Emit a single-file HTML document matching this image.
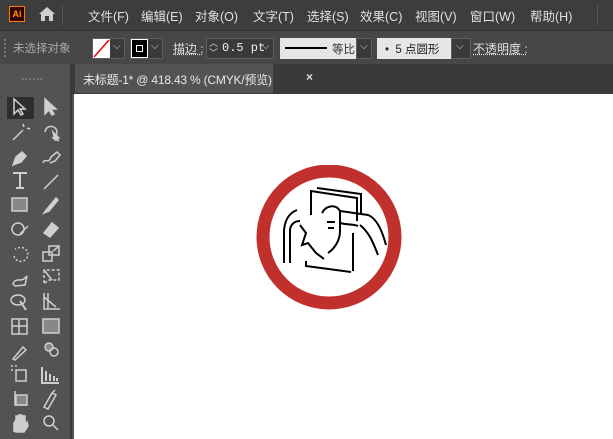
<!DOCTYPE html>
<html><head><meta charset="utf-8"><style>
*{margin:0;padding:0;box-sizing:border-box}
body{width:613px;height:439px;overflow:hidden;background:#535353;font-family:"Liberation Sans","Noto Sans CJK SC",sans-serif;position:relative;color:#d6d6d6}
.a{position:absolute}
#menu{left:0;top:0;width:613px;height:30px;background:#3d3d3d}
#menu span{position:absolute;top:6px;font-size:12.5px;color:#e0e0e0}
#ctl{left:0;top:30px;width:613px;height:34px;background:#474747;border-top:1px solid #333}
.box{position:absolute;border:1px solid #5e5e5e;background:#3a3a3a}
#tabs{left:62px;top:64px;width:551px;height:30px;background:#3a3a3a}
#tab{left:75px;top:64px;width:198px;height:29px;background:#535353;font-size:12px;color:#e8e8e8;padding:7px 0 0 8px;white-space:nowrap;letter-spacing:-0.2px}
#canvas{left:74px;top:94px;width:539px;height:345px;background:#fff}
#tool{left:0;top:64px;width:72px;height:375px;background:#535353;border-right:2px solid #3a3a3a}
</style></head><body>
<div id="menu" class="a">
 <div class="a" style="left:9px;top:6px;width:16px;height:16px;background:#330000;border:1px solid #ff7c00;color:#ff9a00;font-size:9px;font-weight:bold;text-align:center;line-height:14px">Ai</div>
 <svg class="a" style="left:38px;top:6px" width="18" height="16"><path d="M9 1L1 8h2v7h4v-5h4v5h4V8h2z" fill="#cfcfcf"/></svg>
 <div class="a" style="left:62px;top:5px;width:1px;height:20px;background:#555"></div>
 <span style="left:88px">文件(F)</span><span style="left:141px">编辑(E)</span><span style="left:195px">对象(O)</span><span style="left:253px">文字(T)</span><span style="left:307px">选择(S)</span><span style="left:360px">效果(C)</span><span style="left:415px">视图(V)</span><span style="left:470px">窗口(W)</span><span style="left:530px">帮助(H)</span>
 <div class="a" style="top:5px;width:1px;height:20px;background:#555;left:597px"></div>
</div>
<div id="ctl" class="a">
 <div class="a" style="left:4px;top:8px;width:2px;height:18px;border-left:2px dotted #777"></div>
 <div class="a" style="left:13px;top:9px;font-size:11.5px;color:#aaa">未选择对象</div>
 <div class="box" style="left:92px;top:7px;width:33px;height:21px;background:#3a3a3a"></div>
 <div class="a" style="left:93px;top:8px;width:17px;height:19px;background:#fff"></div>
 <svg class="a" style="left:93px;top:8px" width="17" height="19"><line x1="1" y1="18" x2="16" y2="1" stroke="#e00" stroke-width="1.5"/></svg>
 <div class="a" style="left:113px;top:10px;font-size:10px">⌵</div>
 <div class="box" style="left:130px;top:7px;width:33px;height:21px"></div>
 <div class="a" style="left:131px;top:8px;width:17px;height:19px;background:#000;border:1px solid #fff"></div>
 <div class="a" style="left:136px;top:14px;width:7px;height:7px;border:1.5px solid #fff"></div>
 <div class="a" style="left:151px;top:10px;font-size:10px">⌵</div>
 <div class="a" style="left:173px;top:9px;font-size:12px;color:#e0e0e0;text-decoration:underline dotted">描边 :</div>
 <div class="box" style="left:206px;top:7px;width:68px;height:21px"></div>
 <div class="a" style="left:209px;top:7px;font-size:9px;line-height:10px">︿<br>﹀</div>
 <div class="a" style="left:222px;top:10px;font-size:12px;font-family:'Liberation Mono',monospace;color:#eee">0.5 pt</div>
 <div class="a" style="left:262px;top:10px;font-size:10px">⌵</div>
 <div class="a" style="left:280px;top:7px;width:76px;height:21px;background:#e6e6e6"></div>
 <div class="a" style="left:285px;top:16px;width:42px;height:2px;background:#000"></div>
 <div class="a" style="left:332px;top:10px;font-size:11.5px;color:#333">等比</div>
 <div class="box" style="left:356px;top:7px;width:16px;height:21px"></div>
 <div class="a" style="left:360px;top:10px;font-size:10px">⌵</div>
 <div class="a" style="left:377px;top:7px;width:74px;height:21px;background:#e6e6e6;font-size:11.5px;color:#222;padding:3px 0 0 8px;white-space:nowrap">•&nbsp; 5 点圆形</div>
 <div class="box" style="left:451px;top:7px;width:20px;height:21px"></div>
 <div class="a" style="left:456px;top:10px;font-size:10px">⌵</div>
 <div class="a" style="left:473px;top:9px;font-size:12px;color:#e0e0e0;text-decoration:underline dotted;white-space:nowrap">不透明度 :</div>
</div>
<div id="tabs" class="a"></div>
<div class="a" style="left:0;top:64px;width:62px;height:12px;background:#3a3a3a;font-size:8px;color:#bbb;padding-left:5px">◂◂</div>
<div id="tab" class="a">未标题-1* @ 418.43 % (CMYK/预览)</div>
<div class="a" style="left:306px;top:70px;font-size:12px;color:#ddd;font-weight:bold">×</div>
<div id="tool" class="a">
 <div class="a" style="left:22px;top:14px;width:20px;height:1px;border-top:2px dotted #777"></div>
</div>
<div class="a" style="left:7px;top:97px;width:27px;height:22px;background:#2e2e2e"></div>
<svg class="a" style="left:0;top:0" width="72" height="439" fill="none" stroke="#cfcfcf" stroke-width="1.5">
 <g transform="translate(10,98)"><path d="M4 1v15l4-4 3 5 2-1-3-5h5z"/></g>
 <g transform="translate(41,98)"><path d="M4 1v15l4-4 3 5 2-1-3-5h5z" fill="#cfcfcf"/></g>
 <g transform="translate(10,122)"><path d="M3 18l10-10M13 2l1 3M17 6l3 1"/></g>
 <g transform="translate(41,122)"><path d="M4 10a6 6 0 1 1 8 6l6 3" /><path d="M12 10l6 6-4 2z" fill="#cfcfcf"/></g>
 <g transform="translate(10,147)"><path d="M3 18l3-8 6-5 4 4-5 6z" fill="#cfcfcf"/></g>
 <g transform="translate(41,147)"><path d="M2 16c2-6 5 2 8-6l6-5 3 3-5 6-5 2"/></g>
 <g transform="translate(10,171)"><path d="M3 2h14M10 2v15M6 17h8" stroke-width="2"/></g>
 <g transform="translate(41,171)"><path d="M3 18l14-14"/></g>
 <g transform="translate(10,195)"><rect x="2" y="3" width="15" height="13" fill="#888"/></g>
 <g transform="translate(41,195)"><path d="M3 18l3-4 9-11 2 2-9 11z" fill="#cfcfcf"/></g>
 <g transform="translate(10,220)"><circle cx="8" cy="9" r="6"/><path d="M10 14l8-8"/></g>
 <g transform="translate(41,220)"><path d="M3 13l8-10 6 5-8 9z" fill="#cfcfcf"/></g>
 <g transform="translate(10,244)"><path d="M4 12a7 7 0 1 0 4-8l-3 1" stroke-dasharray="2 2"/></g>
 <g transform="translate(41,244)"><rect x="2" y="8" width="9" height="9"/><rect x="8" y="2" width="10" height="9"/><path d="M12 7l5-4"/></g>
 <g transform="translate(10,268)"><path d="M3 16c3-8 8 0 14-8l-2 9-10 1z"/></g>
 <g transform="translate(41,268)"><path d="M3 2v14l4-4h11V2z" stroke-dasharray="3 2"/><path d="M3 2l8 10" /></g>
 <g transform="translate(10,292)"><ellipse cx="8" cy="8" rx="7" ry="5"/><path d="M10 9l6 9" stroke-width="2"/></g>
 <g transform="translate(41,292)"><path d="M3 1v16h16M3 5l12 10M7 1v16"/></g>
 <g transform="translate(10,317)"><rect x="2" y="2" width="15" height="15"/><path d="M2 9h15M9 2v15"/></g>
 <g transform="translate(41,317)"><rect x="2" y="2" width="16" height="14" fill="#888"/></g>
 <g transform="translate(10,341)"><path d="M3 18l10-12 3 3-11 10z"/></g>
 <g transform="translate(41,341)"><circle cx="8" cy="6" r="4" fill="#888"/><circle cx="13" cy="11" r="4"/></g>
 <g transform="translate(10,365)"><rect x="6" y="5" width="10" height="11"/><path d="M1 1h2M1 5h2M5 1h2"/></g>
 <g transform="translate(41,365)"><path d="M1 2v16h17M5 16v-10M9 16v-7M13 16v-5M16 16v-3" stroke-width="2"/></g>
 <g transform="translate(10,389)"><path d="M5 2v14h12" /><rect x="6" y="6" width="11" height="10" fill="#888"/></g>
 <g transform="translate(41,389)"><path d="M3 18l8-14 4 2-8 14zM11 4l3-3"/></g>
 <g transform="translate(10,413)"><path d="M4 18v-8l2-3v5-9h3v8-9h3v9-8h3v9l2-3 1 4-4 6h-8z" fill="#cfcfcf"/></g>
 <g transform="translate(41,413)"><circle cx="8" cy="8" r="5"/><path d="M12 12l5 5"/></g>
</svg>
<div id="canvas" class="a"></div>
<svg class="a" style="left:250px;top:165px" width="160" height="150">
 <circle cx="79" cy="72" r="66" fill="none" stroke="#c0312e" stroke-width="13"/>
 <g fill="none" stroke="#000" stroke-width="2">
  <path d="M61 50V26l46 7v23"/>
  <path d="M67 23l44 6v20"/>
  <path d="M47 45c-8 3-12 10-13 20v33"/>
  <path d="M40 98V66c0-6 4-10 10-10"/>
  <path d="M72 48c4-8 14-9 18-2l28 4c8 3 14 15 18 30M90 46v20c0 10-6 18-12 22M77 57h8M78 63h6"/>
  <path d="M108 61c-4-2-10-1-18-3M110 60c10 8 14 20 18 30"/>
  <path d="M50 60l6 8-4 12 6-2 8 10 8 6"/>
  <path d="M56 96v5l45 6"/>
  <path d="M103 68v38"/>
 </g>
</svg>
</body></html>
